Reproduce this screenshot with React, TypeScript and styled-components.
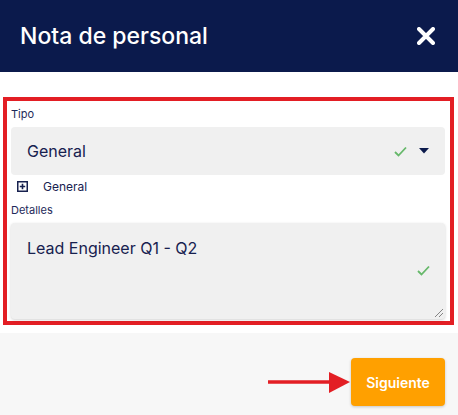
import React from 'react';
import styled, { createGlobalStyle } from 'styled-components';

const GlobalStyle = createGlobalStyle`
  body {
    margin: 0;
    font-family: Inter, "Noto Sans", sans-serif;
    background: #fff;
  }
`;

const Page = styled.div`
  width: 458px;
  height: 415px;
  display: flex;
  flex-direction: column;
  overflow: hidden;
`;

const Header = styled.div`
  height: 72px;
  flex: none;
  background-color: #0b1a4c;
  display: flex;
  align-items: center;
  justify-content: space-between;
  padding: 0 23px 0 20px;
`;

const Title = styled.h1`
  margin: 0;
  color: #fff;
  font-size: 23px;
  font-weight: 500;
`;

const CloseButton = styled.button`
  border: none;
  background: none;
  padding: 0;
  display: flex;
  cursor: pointer;
`;

const Body = styled.div`
  padding: 25px 4px 8px 3px;
  background: #fff;
`;

const Highlight = styled.div`
  border: 4px solid #e31e24;
  padding: 5px 5px 2px 4px;
  display: flex;
  flex-direction: column;
`;

const Label = styled.label`
  font-size: 11px;
  color: #1e2a5a;
  line-height: 14px;
  margin: 1px 0 6px;
`;

const SelectBox = styled.div`
  height: 48px;
  background: #f0f0f0;
  border-radius: 4px;
  display: flex;
  align-items: center;
  padding: 0 16px;
  color: #17214f;
  font-size: 16px;
`;

const Value = styled.span`
  flex: 1;
`;

const Icons = styled.div`
  display: flex;
  align-items: center;
  gap: 12px;
`;

const OptionRow = styled.div`
  display: flex;
  align-items: center;
  gap: 15px;
  padding: 2px 0 0 6px;
  height: 18px;
  font-size: 12px;
  color: #17214f;
  margin-bottom: 7px;
`;

const TextArea = styled.div`
  position: relative;
  height: 96px;
  background: #f0f0f0;
  border-radius: 4px;
  box-shadow: 0 1px 3px rgba(0, 0, 0, 0.18);
  padding: 15px 16px;
  box-sizing: border-box;
  color: #17214f;
  font-size: 16px;
`;

const FieldCheck = styled.span`
  position: absolute;
  right: 15px;
  top: 42px;
  display: flex;
`;

const Grip = styled.span`
  position: absolute;
  right: 2px;
  bottom: 2px;
  display: flex;
`;

const Footer = styled.div`
  flex: 1;
  background: #f7f7f7;
  display: flex;
  justify-content: flex-end;
  align-items: flex-start;
  gap: 1px;
  padding: 25px 13px 0 0;
`;

const Pointer = styled.svg`
  margin-top: 14px;
`;

const NextButton = styled.button`
  width: 94px;
  height: 48px;
  border: none;
  border-radius: 4px;
  background-color: #ffa000;
  color: #fff;
  font-family: Inter, "Noto Sans", sans-serif;
  font-size: 14px;
  font-weight: 600;
  box-shadow: 0 1px 3px rgba(0, 0, 0, 0.2);
  cursor: pointer;
`;

const Check = () => (
  <svg width="13" height="11" viewBox="0 0 13 11">
    <path d="M1 6 L4.5 9.5 L12 1.5" fill="none" stroke="#66b86a" strokeWidth="1.8" />
  </svg>
);

export default function App() {
  return (
    <Page>
      <GlobalStyle />
      <Header>
        <Title>Nota de personal</Title>
        <CloseButton aria-label="Cerrar">
          <svg width="18" height="18" viewBox="0 0 18 18">
            <path d="M2 2 L16 16 M16 2 L2 16" stroke="#fff" strokeWidth="4" strokeLinecap="round" />
          </svg>
        </CloseButton>
      </Header>
      <Body>
        <Highlight>
          <Label>Tipo</Label>
          <SelectBox>
            <Value>General</Value>
            <Icons>
              <Check />
              <svg width="10" height="6" viewBox="0 0 10 6">
                <path d="M0 0 H10 L5 5.5 Z" fill="#0b1a4c" />
              </svg>
            </Icons>
          </SelectBox>
          <OptionRow>
            <svg width="11" height="11" viewBox="0 0 11 11">
              <rect x="0.75" y="0.75" width="9.5" height="9.5" fill="none" stroke="#17214f" strokeWidth="1.5" />
              <path d="M5.5 2.8 V8.2 M2.8 5.5 H8.2" stroke="#17214f" strokeWidth="1.6" />
            </svg>
            <span>General</span>
          </OptionRow>
          <Label>Detalles</Label>
          <TextArea>
            Lead Engineer Q1 - Q2
            <FieldCheck>
              <Check />
            </FieldCheck>
            <Grip>
              <svg width="8" height="8" viewBox="0 0 8 8">
                <path d="M8 0 L0 8 M8 4 L4 8" stroke="#777" strokeWidth="0.9" />
              </svg>
            </Grip>
          </TextArea>
        </Highlight>
      </Body>
      <Footer>
        <Pointer width="82" height="22" viewBox="0 0 82 22">
          <path d="M0 10 H62" stroke="#e31e24" strokeWidth="3.5" />
          <path d="M61 0 L82 10 L61 21 Z" fill="#e31e24" />
        </Pointer>
        <NextButton>Siguiente</NextButton>
      </Footer>
    </Page>
  );
}
